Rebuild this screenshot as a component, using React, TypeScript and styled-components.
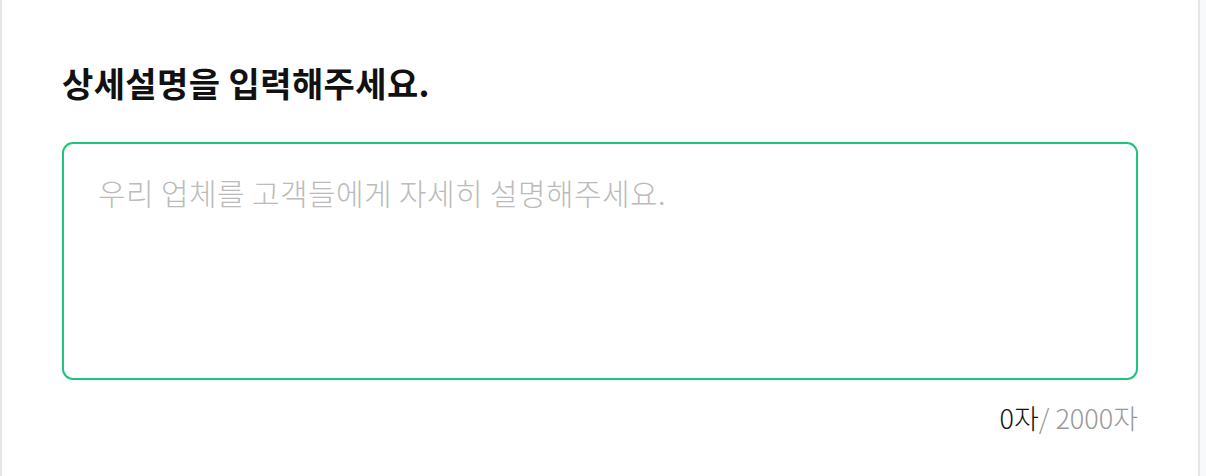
import styled, { createGlobalStyle } from "styled-components";
import { useState } from "react";

const GlobalStyle = createGlobalStyle`
  html, body {
    margin: 0;
    padding: 0;
    background: #f8f9fa;
    font-family: "Noto Sans CJK KR", "Noto Sans", sans-serif;
  }
`;

const MAX = 2000;

function App() {
  const [text, setText] = useState("");

  return (
    <>
      <GlobalStyle />
      <WrapPage>
        <Title>상세설명을 입력해주세요.</Title>
        <TextBox
          value={text}
          maxLength={MAX}
          autoFocus
          placeholder="우리 업체를 고객들에게 자세히 설명해주세요."
          onChange={(e) => setText(e.target.value)}
        />
        <Counter>
          <span className="current">{text.length}자</span>
          <span className="max">/ {MAX}자</span>
        </Counter>
      </WrapPage>
    </>
  );
}

export default App;

const WrapPage = styled.div`
  width: 1200px;
  min-height: 476px;
  box-sizing: border-box;
  background: #ffffff;
  border-left: 2px solid #e3e6ea;
  border-right: 2px solid #e3e6ea;
  padding: 60px 60px 0 60px;
  display: flex;
  flex-direction: column;
`;

const Title = styled.h2`
  margin: 0;
  font-size: 34px;
  line-height: 46px;
  font-weight: 700;
  color: #111111;
  letter-spacing: 0.4px;
`;

const TextBox = styled.textarea`
  margin-top: 36px;
  height: 238px;
  box-sizing: border-box;
  padding: 28px 34px;
  border: 2px solid #1ec47e;
  border-radius: 11px;
  resize: none;
  outline: none;
  font-family: inherit;
  font-size: 30px;
  font-weight: 300;
  line-height: 40px;
  letter-spacing: 0.4px;
  color: #222;
  caret-color: #222;

  &::placeholder {
    color: #bbbbbb;
  }
`;

const Counter = styled.div`
  margin-top: 20px;
  display: flex;
  justify-content: flex-end;
  font-size: 27px;
  line-height: 36px;
  font-weight: 300;

  .current {
    color: #111;
  }
  .max {
    color: #999999;
  }
`;
